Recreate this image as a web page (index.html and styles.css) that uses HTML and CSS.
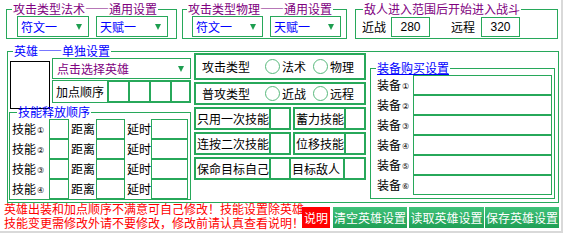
FILE: index.html
```html
<!DOCTYPE html>
<html lang="zh-CN">
  <head>
    <meta charset="UTF-8" />
    <meta name="viewport" content="width=device-width, initial-scale=1.0" />
    <title>英雄设置</title>
    <link rel="stylesheet" href="styles.css">
  </head>
  <body>
    <div class="panel">
      <div class="top">
        <fieldset class="group g-magic">
          <legend class="purple">攻击类型法术——通用设置</legend>
          <div class="select-row">
            <div class="select"><span class="blue">符文一</span><i class="caret"></i></div>
            <div class="select"><span class="blue">天赋一</span><i class="caret"></i></div>
          </div>
        </fieldset>
        <fieldset class="group g-phys">
          <legend class="purple">攻击类型物理——通用设置</legend>
          <div class="select-row">
            <div class="select"><span class="blue">符文一</span><i class="caret"></i></div>
            <div class="select"><span class="blue">天赋一</span><i class="caret"></i></div>
          </div>
        </fieldset>
        <fieldset class="group g-range">
          <legend class="purple">敌人进入范围后开始进入战斗</legend>
          <div class="range-row">
            <span class="lbl">近战</span>
            <div class="num">280</div>
            <span class="lbl lbl-far">远程</span>
            <div class="num">320</div>
          </div>
        </fieldset>
      </div>

      <fieldset class="group hero">
        <legend class="blue">英雄——单独设置</legend>
        <div class="cols">
          <div class="col-left">
            <div class="hero-head">
              <div class="avatar"></div>
              <div class="hero-ctrl">
                <div class="select hero-select"><span class="purple">点击选择英雄</span><i class="caret"></i></div>
                <div class="points">
                  <span class="points-lbl">加点顺序</span>
                  <span class="pt"></span><span class="pt"></span><span class="pt"></span><span class="pt"></span>
                </div>
              </div>
            </div>
            <fieldset class="group skills">
              <legend class="blue">技能释放顺序</legend>
              <div class="skill-grid">
                <span class="sk">技能<small>①</small></span><span class="inp"></span>
                <span class="sk-lbl">距离</span><span class="inp"></span>
                <span class="sk-lbl">延时</span><span class="inp"></span>

                <span class="sk">技能<small>②</small></span><span class="inp"></span>
                <span class="sk-lbl">距离</span><span class="inp"></span>
                <span class="sk-lbl">延时</span><span class="inp"></span>

                <span class="sk">技能<small>③</small></span><span class="inp"></span>
                <span class="sk-lbl">距离</span><span class="inp"></span>
                <span class="sk-lbl">延时</span><span class="inp"></span>

                <span class="sk">技能<small>④</small></span><span class="inp"></span>
                <span class="sk-lbl">距离</span><span class="inp"></span>
                <span class="sk-lbl">延时</span><span class="inp"></span>
              </div>
            </fieldset>
          </div>

          <div class="col-mid">
            <div class="radio-box tall">
              <span class="radio-lbl">攻击类型</span>
              <i class="radio"></i><span>法术</span>
              <i class="radio"></i><span>物理</span>
            </div>
            <div class="radio-box">
              <span class="radio-lbl">普攻类型</span>
              <i class="radio"></i><span>近战</span>
              <i class="radio"></i><span>远程</span>
            </div>
            <div class="check-row">
              <div class="check wide"><span class="check-lbl">只用一次技能</span><span class="tick"></span></div>
              <div class="check"><span class="check-lbl">蓄力技能</span><span class="tick"></span></div>
            </div>
            <div class="check-row">
              <div class="check wide"><span class="check-lbl">连按二次技能</span><span class="tick"></span></div>
              <div class="check"><span class="check-lbl">位移技能</span><span class="tick"></span></div>
            </div>
            <div class="check-row joined">
              <div class="check wide"><span class="check-lbl">保命目标自己</span><span class="tick"></span></div>
              <div class="check"><span class="check-lbl">目标敌人</span><span class="tick"></span></div>
            </div>
          </div>

          <fieldset class="group equip">
            <legend class="blue">装备购买设置</legend>
            <div class="equip-row"><span class="eq">装备<small>①</small></span><span class="eq-inp"></span></div>
            <div class="equip-row"><span class="eq">装备<small>②</small></span><span class="eq-inp"></span></div>
            <div class="equip-row"><span class="eq">装备<small>③</small></span><span class="eq-inp"></span></div>
            <div class="equip-row"><span class="eq">装备<small>④</small></span><span class="eq-inp"></span></div>
            <div class="equip-row"><span class="eq">装备<small>⑤</small></span><span class="eq-inp"></span></div>
            <div class="equip-row"><span class="eq">装备<small>⑥</small></span><span class="eq-inp"></span></div>
          </fieldset>
        </div>
      </fieldset>

      <div class="bottom">
        <p class="note">英雄出装和加点顺序不满意可自己修改！技能设置除英雄<br>技能变更需修改外请不要修改，修改前请认真查看说明！</p>
        <div class="buttons">
          <button class="btn btn-help">说明</button>
          <button class="btn btn-clear">清空英雄设置</button>
          <button class="btn btn-load">读取英雄设置</button>
          <button class="btn btn-save">保存英雄设置</button>
        </div>
      </div>
    </div>
  </body>
</html>
```

FILE: styles.css
```css
* {
  box-sizing: border-box;
}
body {
  margin: 0;
  background: #fff;
  color: #000;
  font-family: "Noto Sans CJK SC", sans-serif;
  font-size: 12px;
  line-height: 14px;
}
.panel {
  width: 563px;
  height: 233px;
  border-right: 2px solid #d9d9d9;
  border-bottom: 2px solid #d9d9d9;
}
.purple {
  color: #800080;
}
.blue {
  color: #0000ff;
}

/* fieldsets */
.group {
  margin: 0;
  padding: 0;
  min-width: 0;
  border: 1px solid #27a85a;
}
.group legend {
  padding: 0 1px;
  margin-left: 5px;
  line-height: 14px;
}

/* top row */
.top {
  display: flex;
  padding: 2px 0 0 6px;
}
.top .group {
  padding-bottom: 1px;
}
.g-magic {
  width: 171px;
}
.g-phys {
  width: 165px;
  margin-left: 5px;
}
.g-phys legend {
  margin-left: 4px;
}
.g-range {
  width: 203px;
  margin-left: 8px;
}
.g-range legend {
  margin-left: 7px;
}
.select-row {
  display: flex;
  gap: 7px;
  padding-left: 10px;
}
.g-phys .select-row {
  padding-left: 9px;
}
.select {
  width: 72px;
  height: 21px;
  display: flex;
  align-items: center;
  justify-content: space-between;
  padding: 0 6px 0 3px;
  border: 1px solid #27a85a;
}
.g-phys .select {
  width: 71px;
}
.caret {
  width: 0;
  height: 0;
  border-left: 3.5px solid transparent;
  border-right: 3.5px solid transparent;
  border-top: 6px solid #1e9e50;
}
.range-row {
  display: flex;
  align-items: center;
  height: 21px;
  padding-left: 6px;
}
.lbl {
  width: 24px;
  margin-right: 5px;
}
.lbl-far {
  margin-left: 21px;
  margin-right: 6px;
}
.num {
  width: 39px;
  height: 20px;
  border: 1px solid #27a85a;
  font-family: "Liberation Sans", sans-serif;
  line-height: 18px;
  text-align: center;
}

/* hero block */
.hero {
  margin: 5px 0 0 7px;
  width: 552px;
}
.cols {
  display: flex;
  align-items: flex-start;
  padding: 0 3px 2px 1px;
}
.col-left {
  width: 182px;
}
.hero-head {
  display: flex;
  align-items: flex-start;
}
.avatar {
  width: 40px;
  height: 48px;
  margin: 3px 0 -3px 1px;
  border: 1px solid #000;
}
.hero-ctrl {
  width: 139px;
  margin-left: 2px;
}
.hero-select {
  width: 139px;
  padding: 0 6px 0 4px;
}
.points {
  display: flex;
  height: 23px;
  margin-top: 1px;
  border: 1px solid #27a85a;
}
.points-lbl {
  flex: 1;
  padding-left: 3px;
  line-height: 21px;
}
.pt {
  width: 21px;
  margin: -1px 0;
  border: 2px solid #27a85a;
  border-right-width: 0;
}
.pt:last-child {
  border-right-width: 2px;
  margin-right: -1px;
}

.skills legend {
  margin-left: 7px;
  line-height: 12px;
}
.skill-grid {
  display: grid;
  grid-template-columns: 39px 20px 27px 29px 26px 37px;
  grid-auto-rows: 20px;
  padding: 1px 2px 0 0;
}
.sk,
.eq {
  padding-left: 2px;
  line-height: 20px;
  white-space: nowrap;
}
.sk small,
.eq small {
  font-family: "DejaVu Sans", sans-serif;
  font-size: 8px;
  margin-left: 1px;
  vertical-align: 1px;
}
.sk-lbl {
  padding-left: 2px;
  line-height: 20px;
}
.inp {
  border: 1px solid #27a85a;
}

/* middle column */
.col-mid {
  width: 172px;
  margin: -5px 0 0 3px;
  display: flex;
  flex-direction: column;
  gap: 2px;
}
.radio-box {
  display: flex;
  align-items: center;
  height: 23px;
  padding-left: 6px;
  border: 2px solid #27a85a;
}
.radio-box.tall {
  height: 27px;
}
.radio-lbl {
  width: 56px;
}
.radio {
  width: 15px;
  height: 15px;
  margin-right: 2px;
  border: 1px solid #58b97c;
  border-radius: 50%;
}
.radio-box span + .radio {
  margin-left: 7px;
}
.check-row {
  display: flex;
  gap: 2px;
}
.check-row.joined {
  gap: 0;
}
.check-row.joined .check + .check {
  border-left: 0;
  width: 75px;
}
.check {
  display: flex;
  width: 73px;
  height: 23px;
  border: 2px solid #27a85a;
}
.check.wide {
  width: 97px;
}
.check-lbl {
  flex: 1;
  padding-left: 1px;
  line-height: 19px;
  white-space: nowrap;
}
.tick {
  width: 21px;
  border-left: 2px solid #27a85a;
}

/* equipment */
.equip {
  width: 185px;
  margin: 3px 0 0 4px;
  padding: 0 2px 3px 0;
}
.equip legend {
  text-decoration: underline;
}
.equip-row {
  display: flex;
  height: 20px;
}
.eq {
  width: 42px;
  padding-left: 6px;
}
.eq-inp {
  width: 139px;
  border: 1px solid #27a85a;
}

/* bottom */
.bottom {
  display: flex;
  align-items: flex-start;
}
.note {
  width: 302px;
  margin: -1px 0 0 0;
  padding-left: 4px;
  color: #ff0000;
  line-height: 14px;
  white-space: nowrap;
}
.buttons {
  display: flex;
  margin: 4px 0 0 0;
}
.btn {
  height: 21px;
  padding: 0;
  border: none;
  color: #fff;
  font-family: "Noto Sans CJK SC", sans-serif;
  font-size: 12px;
  line-height: 21px;
  text-align: center;
  background: linear-gradient(#40c27a, #1f9f55);
}
.btn-help {
  width: 28px;
  background: #ff0000;
}
.btn-clear {
  width: 74px;
  margin-left: 3px;
}
.btn-load {
  width: 75px;
  margin-left: 2px;
}
.btn-save {
  width: 74px;
  margin-left: 1px;
}
```
